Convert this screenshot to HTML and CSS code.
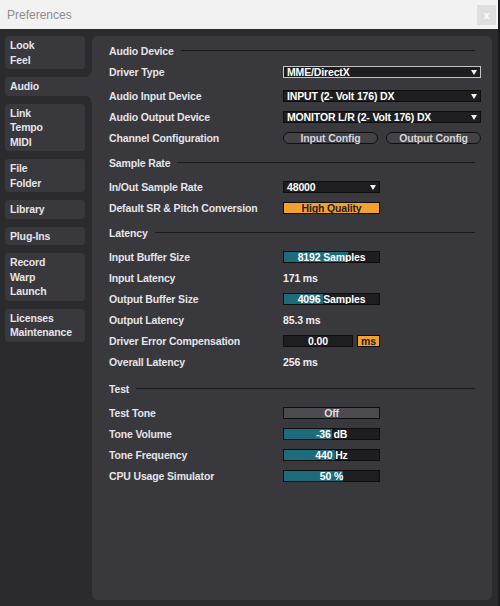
FILE: index.html
```html
<!DOCTYPE html>
<html lang="en">

<head>
    <meta charset="UTF-8">
    <title>Preferences</title>
    <link rel="stylesheet" href="styles.css">
</head>

<body>
    <div class="window">
        <header class="titlebar">
            <span class="title">Preferences</span>
            <span class="close">x</span>
        </header>

        <div class="body">
            <!-- Tabs -->
            <nav class="tabs">
                <a class="tab">Look<br>Feel</a>
                <a class="tab active">Audio</a>
                <a class="tab">Link<br>Tempo<br>MIDI</a>
                <a class="tab">File<br>Folder</a>
                <a class="tab">Library</a>
                <a class="tab">Plug-Ins</a>
                <a class="tab">Record<br>Warp<br>Launch</a>
                <a class="tab">Licenses<br>Maintenance</a>
            </nav>

            <!-- Audio settings -->
            <main class="panel">
                <section class="section">
                    <h2 class="section-head">Audio Device</h2>
                    <div class="row">
                        <span class="label">Driver Type</span>
                        <div class="select wide focused">MME/DirectX</div>
                    </div>
                    <div class="row gap-top">
                        <span class="label">Audio Input Device</span>
                        <div class="select wide">INPUT (2- Volt 176) DX</div>
                    </div>
                    <div class="row">
                        <span class="label">Audio Output Device</span>
                        <div class="select wide">MONITOR L/R (2- Volt 176) DX</div>
                    </div>
                    <div class="row">
                        <span class="label">Channel Configuration</span>
                        <div class="buttons">
                            <button class="pill">Input Config</button>
                            <button class="pill">Output Config</button>
                        </div>
                    </div>
                </section>

                <section class="section">
                    <h2 class="section-head">Sample Rate</h2>
                    <div class="row">
                        <span class="label">In/Out Sample Rate</span>
                        <div class="select">48000</div>
                    </div>
                    <div class="row">
                        <span class="label">Default SR &amp; Pitch Conversion</span>
                        <div class="toggle on">High Quality</div>
                    </div>
                </section>

                <section class="section">
                    <h2 class="section-head">Latency</h2>
                    <div class="row">
                        <span class="label">Input Buffer Size</span>
                        <div class="slider"><span class="fill" style="width: 67%"></span><span class="val">8192 Samples</span></div>
                    </div>
                    <div class="row">
                        <span class="label">Input Latency</span>
                        <span class="value">171 ms</span>
                    </div>
                    <div class="row">
                        <span class="label">Output Buffer Size</span>
                        <div class="slider"><span class="fill" style="width: 41%"></span><span class="val">4096 Samples</span></div>
                    </div>
                    <div class="row">
                        <span class="label">Output Latency</span>
                        <span class="value">85.3 ms</span>
                    </div>
                    <div class="row">
                        <span class="label">Driver Error Compensation</span>
                        <div class="number">0.00</div>
                        <div class="unit">ms</div>
                    </div>
                    <div class="row">
                        <span class="label">Overall Latency</span>
                        <span class="value">256 ms</span>
                    </div>
                </section>

                <section class="section test">
                    <h2 class="section-head">Test</h2>
                    <div class="row">
                        <span class="label">Test Tone</span>
                        <div class="toggle">Off</div>
                    </div>
                    <div class="row">
                        <span class="label">Tone Volume</span>
                        <div class="slider"><span class="fill" style="width: 50%"></span><span class="val">-36 dB</span></div>
                    </div>
                    <div class="row">
                        <span class="label">Tone Frequency</span>
                        <div class="slider"><span class="fill" style="width: 54%"></span><span class="val">440 Hz</span></div>
                    </div>
                    <div class="row">
                        <span class="label">CPU Usage Simulator</span>
                        <div class="slider"><span class="fill" style="width: 62%"></span><span class="val">50 %</span></div>
                    </div>
                </section>
            </main>
        </div>
    </div>
</body>

</html>
```

FILE: styles.css
```css
/* Reset */

* {
    margin: 0;
    padding: 0;
    box-sizing: border-box;
}

body {
    width: 500px;
    height: 606px;
    overflow: hidden;
    background: #1c1c1e;
    font-family: "Liberation Sans", Arial, sans-serif;
    font-size: 10.5px;
    letter-spacing: -0.15px;
    font-weight: bold;
    color: #e4e4e8;
}

.window {
    width: 498px;
    height: 606px;
    background: #2b2b2d;
    display: flex;
    flex-direction: column;
}

/* Title bar */

.titlebar {
    height: 29px;
    flex: none;
    background: #f2f2f2;
    display: flex;
    align-items: center;
    justify-content: space-between;
    padding: 0 2px 0 7px;
}

.title {
    font-size: 12px;
    font-weight: normal;
    letter-spacing: 0;
    color: #8c8c8c;
}

.close {
    width: 19px;
    height: 20px;
    background: #dedede;
    color: #fff;
    font-size: 10px;
    display: flex;
    align-items: center;
    justify-content: center;
    margin-top: 1px;
}

/* Body */

.body {
    flex: 1;
    display: flex;
    padding: 7px 6px 6px 5px;
    gap: 7px;
}

/* Tabs */

.tabs {
    width: 80px;
    flex: none;
    display: flex;
    flex-direction: column;
    gap: 8px;
}

.tab {
    display: block;
    background: #39383c;
    border-radius: 4px;
    padding: 2px 0 2px 5px;
    line-height: 14.5px;
}

.tab.active {
    position: relative;
    margin-right: -7px;
    border-radius: 4px 0 0 4px;
    background: #39383d;
}

.tab.active::before,
.tab.active::after {
    content: "";
    position: absolute;
    right: 0;
    width: 7px;
    height: 6px;
}

.tab.active::before {
    top: -6px;
    background: radial-gradient(circle at 0 0, transparent 6px, #39383d 6.5px);
}

.tab.active::after {
    bottom: -6px;
    background: radial-gradient(circle at 0 100%, transparent 6px, #39383d 6.5px);
}

/* Panel */

.panel {
    flex: 1;
    background: #39383d;
    border-radius: 6px;
    padding: 4px 11px 0 17px;
}

.section + .section {
    margin-top: 4px;
}

.section.test {
    margin-top: 6px;
}

.section-head {
    height: 21px;
    display: flex;
    align-items: center;
    font-size: 10.5px;
    margin-right: 6px;
    margin-bottom: 3px;
}

.section-head::after {
    content: "";
    flex: 1;
    height: 1px;
    background: #1a1a1c;
    margin-left: 7px;
}

.section:first-child .section-head {
    margin-bottom: 0;
}

.row {
    height: 21px;
    display: flex;
    align-items: center;
}

.row.gap-top {
    margin-top: 3px;
}

.label {
    width: 174px;
    flex: none;
}

.value {
    color: #eeeef0;
}

/* Controls */

.select,
.slider,
.toggle,
.number,
.unit {
    height: 12px;
    width: 97px;
    line-height: 11px;
    border: 1px solid #0e0e0f;
    background: #1e1e20;
    color: #fff;
    position: relative;
}

.select {
    padding-left: 3px;
}

.select::after {
    content: "";
    position: absolute;
    right: 3px;
    top: 3px;
    border-left: 3.5px solid transparent;
    border-right: 3.5px solid transparent;
    border-top: 5px solid #f2f2f2;
}

.select.wide {
    width: 198px;
}

.select.focused {
    border-color: #c4c4c4;
}

.toggle {
    text-align: center;
    background: #4b4a4f;
    color: #dcdcdc;
}

.toggle.on {
    background: #f4a02e;
    color: #222;
}

.slider {
    text-align: center;
    overflow: hidden;
}

.slider .fill {
    position: absolute;
    left: 0;
    top: 0;
    bottom: 0;
    background: #1d6b7b;
}

.slider .val {
    position: relative;
}

.number {
    width: 70px;
    text-align: center;
}

.unit {
    width: 23px;
    margin-left: 4px;
    text-align: center;
    background: #f4a02e;
    color: #222;
}

.buttons {
    display: flex;
    gap: 8px;
}

.pill {
    width: 95px;
    height: 12px;
    line-height: 10px;
    border: 1px solid #101011;
    border-radius: 6px;
    background: #434247;
    color: #d4d4d8;
    font-family: inherit;
    font-size: 10.5px;
    letter-spacing: -0.15px;
    font-weight: bold;
}
```
